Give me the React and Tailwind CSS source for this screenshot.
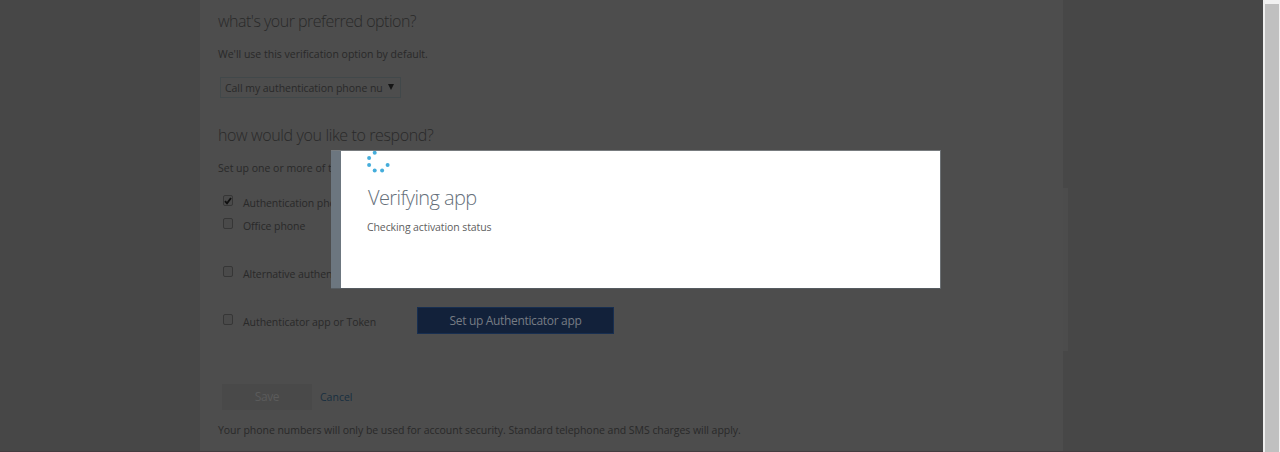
const Check = ({ checked }) => (
  <span className="mt-[1px] flex h-[11px] w-[10px] shrink-0 items-center justify-center rounded-[2px] border border-[#363636] bg-[#4a4a4a]">
    {checked && (
      <svg viewBox="0 0 8 8" className="h-2 w-2 shrink-0" fill="none" stroke="#101010" strokeWidth="1.9">
        <path d="M1 4.2 3 6.3 7 1" />
      </svg>
    )}
  </span>
);

const Option = ({ label, checked, className }) => (
  <div className={`flex ${className}`}>
    <Check checked={checked} />
    <span className="ml-[10px] mt-[1px] whitespace-nowrap leading-4 tracking-[-0.06px]">{label}</span>
  </div>
);

const dots = [[7.7, 1.8], [2.1, 7.1], [2.1, 14.1], [7.7, 19.5], [15.1, 19.5], [20.6, 14.1]];

export default function App() {
  return (
    <div className="relative flex h-[452px] w-[1280px] overflow-hidden bg-[#474747] font-['Open_Sans','Noto_Sans',sans-serif] text-[10.5px] text-[#292929]">
      <div className="flex w-[1263px] shrink-0 pl-[200px]">
        <main className="flex h-[452px] w-[863px] flex-col bg-[#4d4d4d] pl-[18px]">
          <h2 className="mt-[9px] text-[16px] font-light leading-6 tracking-[-0.5px]">what's your preferred option?</h2>
          <p className="mt-[13px] leading-4">We'll use this verification option by default.</p>
          <div className="ml-[2px] mt-[15px] flex h-[21px] w-[181px] shrink-0 items-center justify-between border border-[#41484a] pl-1 pr-[6px]">
            <span className="whitespace-nowrap leading-4 tracking-[-0.05px]">Call my authentication phone nu</span>
            <svg viewBox="0 0 6 6" className="mb-[2px] h-[6px] w-[6px] shrink-0" fill="#151515">
              <path d="M0 0h6L3 6z" />
            </svg>
          </div>
          <h2 className="mt-[25px] text-[16px] font-light leading-6 tracking-[-0.37px]">how would you like to respond?</h2>
          <p className="mt-[13px] leading-4">Set up one or more of these options.</p>
          <div className="ml-[5px] mt-[18px] flex flex-col">
            <Option label="Authentication phone" checked className="h-[23px]" />
            <Option label="Office phone" className="h-[48px]" />
            <Option label="Alternative authentication phone" className="h-[48px]" />
            <div className="flex h-[71px]">
              <Option label="Authenticator app or Token" className="w-[194px]" />
              <button className="-mt-[6px] h-[27px] w-[197px] border border-[#172e50] bg-[#12213a] text-[12px] tracking-[-0.33px] text-[#777c84]">
                Set up Authenticator app
              </button>
            </div>
          </div>
          <div className="ml-1 flex h-[26px] items-center">
            <button className="h-[26px] w-[90px] bg-[#494949] text-[12px] tracking-[-0.4px] text-[#5b5b5b]">Save</button>
            <a className="ml-2 leading-4 text-[#182f40]">Cancel</a>
          </div>
          <p className="mt-[12px] whitespace-nowrap leading-4 tracking-[-0.04px]">
            Your phone numbers will only be used for account security. Standard telephone and SMS charges will apply.
          </p>
        </main>
        <div className="mt-[188px] h-[163px] w-[5px] bg-[#4c4c4c]" />
      </div>
      <div className="h-full w-[17px] border-l-2 border-[#eeeeee] bg-[#f1f1f1] pt-1">
        <div className="h-full w-[14px] bg-[#c0c0c0]" />
      </div>

      <section className="absolute left-[331px] top-[150px] flex h-[139px] w-[610px] border-b border-r border-t border-b-[#555b60] border-r-[#6c7175] border-t-[#777b7e] bg-white text-[#606060]">
        <div className="h-full w-[10px] bg-[#6c767f]" />
        <div className="pl-[26px]">
          <svg viewBox="0 0 24 22" className="h-[22px] w-6" fill="#45addb">
            {dots.map(([x, y]) => (
              <circle key={`${x}-${y}`} cx={x} cy={y} r="2" />
            ))}
          </svg>
          <h1 className="ml-[1px] mt-[11px] text-[20px] font-light leading-7 tracking-[-0.6px] text-[#66707a]">Verifying app</h1>
          <p className="mt-[7px] leading-4 tracking-[-0.1px]">Checking activation status</p>
        </div>
      </section>
      <div className="absolute bottom-0 left-0 h-px w-[1263px] bg-[#443c40]" />
    </div>
  );
}
